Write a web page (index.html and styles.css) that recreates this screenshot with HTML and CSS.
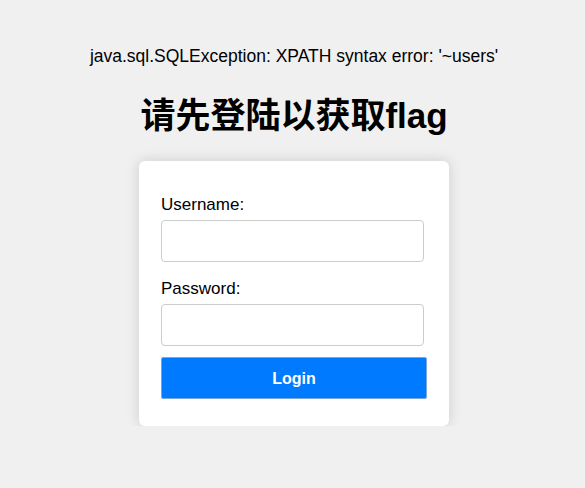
FILE: index.html
```html
<!DOCTYPE html>
<html>
<head>
<meta charset="utf-8">
<link rel="stylesheet" href="styles.css">
</head>
<body>
<main class="page">
  <p class="error">java.sql.SQLException: XPATH syntax error: '~users'</p>
  <h1 class="title">请先登陆以获取flag</h1>
  <form class="card">
    <label class="label" for="u">Username:</label>
    <input class="field" id="u" type="text">
    <label class="label label-gap" for="p">Password:</label>
    <input class="field" id="p" type="password">
    <button class="btn" type="button">Login</button>
  </form>
</main>
</body>
</html>
```
FILE: styles.css
```css
html, body {
  margin: 0;
  padding: 0;
  background: #f0f0f0;
}
body {
  font-family: "Liberation Sans", Arial, "Noto Sans CJK SC", sans-serif;
  color: #000;
}
.page {
  display: flex;
  flex-direction: column;
  align-items: center;
  padding: 46px 0 0 3px;
}
.error {
  margin: 0;
  font-size: 17.5px;
  line-height: 20px;
}
.title {
  margin: 30px 0 0;
  font-size: 35px;
  line-height: 40px;
  font-weight: bold;
  font-family: "Liberation Sans", Arial, "Noto Sans CJK SC", sans-serif;
}
.card {
  margin-top: 25px;
  width: 266px;
  padding: 34px 22px 27px;
  background: #fff;
  border-radius: 6px;
  box-shadow: 0 0 14px rgba(0, 0, 0, 0.15);
  display: flex;
  flex-direction: column;
}
.label {
  font-size: 17px;
  line-height: 20px;
}
.label-gap {
  margin-top: 17px;
}
.field {
  margin: 5px 0 0;
  width: 263px;
  height: 42px;
  box-sizing: border-box;
  border: 1px solid #ccc;
  border-radius: 4px;
  padding: 8px;
  font-size: 16px;
  background: #fff;
}
.btn {
  margin-top: 11px;
  width: 266px;
  height: 42px;
  padding-top: 2px;
  border: 1px solid #7aa7d8;
  border-radius: 2px;
  background: #007bff;
  color: #fff;
  font-family: "Liberation Sans", Arial, sans-serif;
  font-weight: bold;
  font-size: 16px;
}
```
